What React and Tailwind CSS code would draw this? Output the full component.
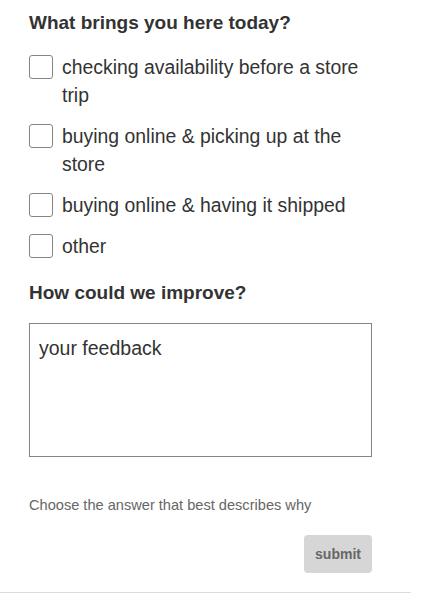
export default function App() {
  const options = [
    "checking availability before a store trip",
    "buying online & picking up at the store",
    "buying online & having it shipped",
    "other",
  ];
  return (
    <div className="w-[411px] bg-white border-b border-[#dcdcdc] pl-[29px] pr-[39px] pt-[11px] pb-[19px] text-[#333333]" style={{ fontFamily: '"Liberation Sans", Arial, sans-serif' }}>
      <h2 className="text-[19px] leading-[24px] font-bold text-[#333333]">What brings you here today?</h2>
      <div className="mt-[18px] flex flex-col gap-[13px]">
        {options.map((o) => (
          <label key={o} className="flex items-start gap-[9px] cursor-pointer">
            <span className="mt-[1.5px] w-[24px] h-[24px] shrink-0 rounded-[3px] border border-[#858585] bg-white"></span>
            <span className="text-[19.4px] leading-[28px] text-[#333333]">{o}</span>
          </label>
        ))}
      </div>
      <h2 className="mt-[21px] text-[19px] leading-[24px] font-bold text-[#333333]">How could we improve?</h2>
      <textarea
        className="mt-[18px] block w-[343px] h-[134px] border border-[#858585] px-[9px] py-[12px] text-[19.5px] leading-[24px] resize-none outline-none placeholder:text-[#333333]"
        style={{ fontFamily: '"Liberation Sans", Arial, sans-serif' }}
        placeholder="your feedback"
      ></textarea>
      <p className="mt-[39px] text-[14.6px] leading-[18px] text-[#666666]">Choose the answer that best describes why</p>
      <div className="mt-[21px] flex justify-end">
        <button className="w-[68px] h-[38px] rounded-[4px] bg-[#d6d6d6] text-[14px] font-bold text-[#666666]" style={{ fontFamily: '"Liberation Sans", Arial, sans-serif' }}>submit</button>
      </div>
    </div>
  );
}
